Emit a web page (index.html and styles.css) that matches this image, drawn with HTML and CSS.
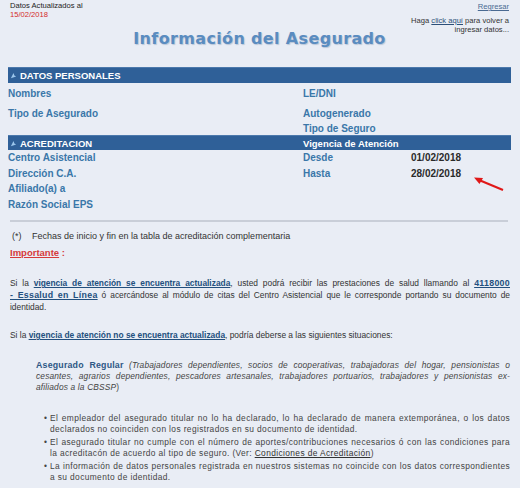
FILE: index.html
```html
<!DOCTYPE html>
<html lang="es">
<head>
<meta charset="utf-8">
<title>Información del Asegurado</title>
<link rel="stylesheet" href="styles.css">
</head>
<body>
<div class="page">
  <header class="top">
    <div class="updated">
      <div>Datos Actualizados al</div>
      <div class="updated-date">15/02/2018</div>
    </div>
    <h1 class="title">Información del Asegurado</h1>
    <div class="back">
      <a class="back-link" href="#">Regresar</a>
      <div class="back-note">Haga <a href="#">click aquí</a> para volver a<br>ingresar datos...</div>
    </div>
  </header>

  <div class="bar">
    <span class="bar-cell"><svg class="bar-icon" viewBox="0 0 8 8"><path d="M1 7 L4 1 L5 4 L7 5 Z" fill="#9cc6ec"/></svg>DATOS PERSONALES</span>
  </div>
  <div class="grid grid-personal">
    <div class="label">Nombres</div>
    <div class="label">LE/DNI</div>
    <div class="label">Tipo de Asegurado</div>
    <div class="stack">
      <div class="label">Autogenerado</div>
      <div class="label">Tipo de Seguro</div>
    </div>
  </div>

  <div class="bar bar-split">
    <span class="bar-cell"><svg class="bar-icon" viewBox="0 0 8 8"><path d="M1 7 L4 1 L5 4 L7 5 Z" fill="#9cc6ec"/></svg>ACREDITACION</span>
    <span class="bar-cell">Vigencia de Atención</span>
  </div>
  <div class="grid grid-acred">
    <div class="stack-tight">
      <div class="label">Centro Asistencial</div>
      <div class="label">Dirección C.A.</div>
      <div class="label">Afiliado(a) a</div>
      <div class="label">Razón Social EPS</div>
    </div>
    <div class="dates">
      <div class="label">Desde</div><div class="value">01/02/2018</div>
      <div class="label">Hasta</div><div class="value">28/02/2018</div>
      <svg class="arrow" viewBox="0 0 32 16"><path d="M30 14 L6 4" stroke="#e01818" stroke-width="2" fill="none"/><path d="M1 1.5 L10 2 L6.5 8 Z" fill="#e01818"/></svg>
    </div>
  </div>

  <hr class="sep">

  <div class="note"><span class="note-mark">(*)</span>Fechas de inicio y fin en la tabla de acreditación complementaria</div>
  <div class="important"><u>Importante</u> :</div>

  <p class="para">Si la <a class="strong-link" href="#">vigencia de atención se encuentra actualizada</a>, usted podrá recibir las prestaciones de salud llamando al <a class="phone-link" href="#">4118000</a> <a class="phone-link nowrap" href="#">- Essalud en Línea</a> ó acercándose al módulo de citas del Centro Asistencial que le corresponde portando su documento de identidad.</p>

  <p class="para para2">Si la <a class="strong-link" href="#">vigencia de atención no se encuentra actualizada</a>, podría deberse a las siguientes situaciones:</p>

  <p class="regular"><b>Asegurado Regular</b> (Trabajadores dependientes, socios de cooperativas, trabajadoras del hogar, pensionistas o cesantes, agrarios dependientes, pescadores artesanales, trabajadores portuarios, trabajadores y pensionistas ex-afiliados a la CBSSP<span class="upright">)</span></p>

  <ul class="reasons">
    <li>El empleador del asegurado titular no lo ha declarado, lo ha declarado de manera extemporánea, o los datos declarados no coinciden con los registrados en su documento de identidad.</li>
    <li>El asegurado titular no cumple con el número de aportes/contribuciones necesarios ó con las condiciones para la acreditacón de acuerdo al tipo de seguro. (Ver: <a href="#">Condiciones de Acreditación</a>)</li>
    <li>La información de datos personales registrada en nuestros sistemas no coincide con los datos correspondientes a su documento de identidad.</li>
  </ul>
</div>
</body>
</html>
```

FILE: styles.css
```css
html, body {
  margin: 0;
  padding: 0;
  background: #e9edf5;
}
body {
  font-family: "Liberation Sans", Arial, sans-serif;
  color: #333;
  width: 520px;
  height: 488px;
  overflow: hidden;
}
.page {
  padding: 0 9px 0 8px;
}
a { color: #2c4f78; }

.top {
  display: grid;
  grid-template-columns: 1fr auto 1fr;
  height: 67px;
}
.updated {
  font-size: 7.6px;
  line-height: 9px;
  padding: 1px 0 0 2px;
  color: #222;
}
.updated-date {
  color: #d42a2a;
}
.title {
  margin: 29px 0 0;
  font-family: "DejaVu Sans", Verdana, sans-serif;
  font-weight: bold;
  font-size: 16px;
  letter-spacing: 0.35px;
  color: #5a8cc0;
  text-shadow: 1px 1px 1px #b9c6d8;
  align-self: start;
  line-height: 20px;
}
.back {
  text-align: right;
  font-size: 7.6px;
  line-height: 9px;
  color: #333;
  padding-top: 2px;
  padding-right: 2px;
}
.back-link {
  display: block;
  color: #4a6a92;
  margin-bottom: 5px;
}
.back-note a { color: #2c4f78; }

.bar {
  display: grid;
  grid-template-columns: 295px 1fr;
  background: #2f6098;
  color: #fff;
  font-weight: bold;
  font-size: 9.5px;
  height: 16px;
  align-items: center;
  border-top: 1px solid #4c79ac;
  box-sizing: border-box;
}
.bar-split { height: 15px; }
.bar-cell {
  display: flex;
  align-items: center;
  padding-left: 2px;
}
.bar-split .bar-cell + .bar-cell { padding-left: 0; }
.bar-icon {
  width: 7px;
  height: 7px;
  margin-right: 3px;
}

.grid {
  display: grid;
  grid-template-columns: 295px 1fr;
}
.label {
  font-size: 10px;
  font-weight: bold;
  color: #3a77a9;
  line-height: 15px;
}
.grid-personal {
  padding-top: 3px;
  row-gap: 4px;
  height: 52px;
  box-sizing: border-box;
}
.grid-personal .label { line-height: 16px; }
.stack .label { line-height: 15px; }

.grid-acred {
  height: 70px;
}
.grid-acred .label { line-height: 15.5px; }
.dates {
  display: grid;
  grid-template-columns: 108px auto;
  align-content: start;
  position: relative;
}
.value {
  font-size: 10px;
  font-weight: bold;
  color: #2a2a2a;
  line-height: 15.5px;
}
.arrow {
  position: absolute;
  left: 170px;
  top: 26px;
  width: 32px;
  height: 16px;
}

.sep {
  margin: 0 3px 0 2px;
  border: 0;
  height: 2px;
  background: #c9ced8;
}

.note {
  font-size: 9px;
  color: #333;
  margin-top: 8px;
  padding-left: 4px;
  line-height: 12px;
}
.note-mark {
  display: inline-block;
  width: 20px;
}
.important {
  color: #d63a3a;
  font-weight: bold;
  font-size: 9.5px;
  margin-top: 5px;
  padding-left: 2px;
  line-height: 12px;
}

.para {
  margin: 18px 1px 0 2px;
  font-size: 8.4px;
  line-height: 12px;
  text-align: justify;
  color: #333;
}
.para2 { margin-top: 16px; }
.strong-link {
  font-weight: bold;
  color: #23507e;
}
.phone-link {
  font-weight: bold;
  color: #23507e;
  font-size: 8.8px;
  line-height: 10px;
  letter-spacing: 0.3px;
}
.nowrap { white-space: nowrap; }

.regular {
  margin: 19px 1px 0 28px;
  font-size: 8.4px;
  line-height: 11px;
  text-align: justify;
  color: #444;
  font-style: italic;
  letter-spacing: 0.15px;
}
.regular b {
  font-style: normal;
  color: #2e5885;
  font-size: 8.8px;
  line-height: 10px;
  letter-spacing: 0.2px;
}
.upright { font-style: normal; }

.reasons {
  margin: 20px 1px 0 35px;
  padding: 0 0 0 7px;
  list-style: none;
  font-size: 8.4px;
  line-height: 11px;
  letter-spacing: 0.38px;
  text-align: justify;
  color: #444;
}
.reasons li {
  position: relative;
  margin-bottom: 2px;
}
.reasons li::before {
  content: "\2022";
  position: absolute;
  left: -6px;
}
.reasons a { color: #333; }
```
